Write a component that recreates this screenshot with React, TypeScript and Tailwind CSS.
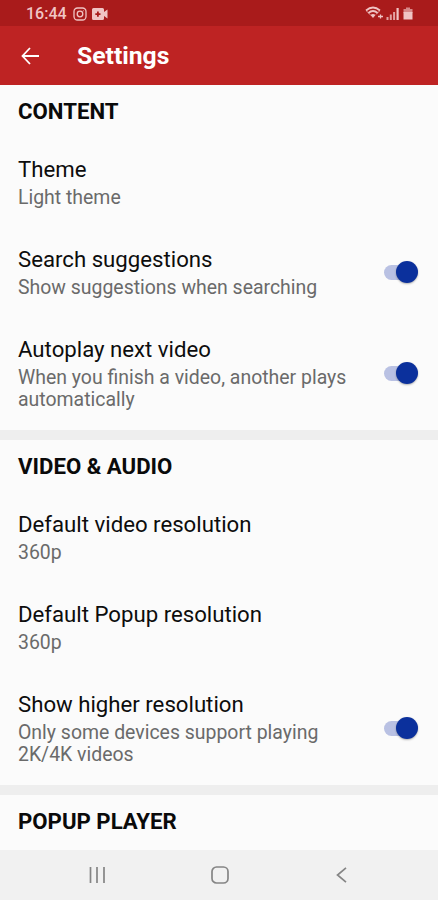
import React from "react";

function Toggle() {
  return (
    <span className="flex h-[22px] w-[34px] shrink-0 items-center">
      <span className="h-[15px] w-[26px] rounded-full bg-[#b9c1e3]" />
      <span className="-ml-[14px] size-[22px] shrink-0 rounded-full bg-[#0b309c] shadow-[0_1px_2px_rgba(0,0,0,0.3)]" />
    </span>
  );
}

type ItemProps = { title: string; lines: string[]; toggle?: boolean };

function Item({ title, lines, toggle }: ItemProps) {
  return (
    <div className="flex items-center justify-between pl-[18px] pr-[20.5px]">
      <div className="pt-[17.5px] pb-[18px]">
        <div className="mb-[4px] text-[22.2px] leading-[28px] whitespace-nowrap text-[#0d0d0d]">{title}</div>
        {lines.map((line) => (
          <div key={line} className="text-[19.45px] leading-[22.5px] whitespace-nowrap text-[#6a6a6a]">
            {line}
          </div>
        ))}
      </div>
      {toggle && <Toggle />}
    </div>
  );
}

function Heading({ children }: { children: React.ReactNode }) {
  return <h2 className="h-[52px] pl-[18px] pt-[13px] text-[22.2px] leading-[27px] font-bold text-[#0a0a0a]">{children}</h2>;
}

export default function App() {
  return (
    <div className="flex h-[900px] w-[438px] flex-col overflow-hidden bg-[#fbfbfb] font-['Roboto',sans-serif]">
      <div className="flex h-[26px] shrink-0 items-center bg-[#a91b1b] pl-[26px] pr-[24px] pt-[2px] text-[#f0c4c4]">
        <span className="w-[47px] text-[16px] leading-[20px] font-medium">16:44</span>
        <svg width="14" height="14" viewBox="0 0 14 14" fill="none" stroke="currentColor" strokeWidth="1.3">
          <rect x="1" y="1" width="12" height="12" rx="3.5" />
          <circle cx="7" cy="7" r="2.8" />
          <circle cx="10.3" cy="3.7" r=".5" fill="currentColor" stroke="none" />
        </svg>
        <svg className="ml-[5px]" width="16" height="12" viewBox="0 0 16 12" fill="currentColor" fillRule="evenodd">
          <path d="M1.5 0h9A1.500 1.500 0 0 1 12 1.500V4l3.500-2.500v9L12 8v2.500a1.500 1.500 0 0 1-1.500 1.500h-9A1.500 1.500 0 0 1 0 10.500v-9A1.500 1.500 0 0 1 1.500 0zM5 3.500v1.700H3.300v1.800H5v1.700h1.800V7h1.700V5.200H6.800V3.500z" />
        </svg>
        <svg className="ml-auto mb-[1px]" width="49" height="15" viewBox="0 0 49 15" fill="none" stroke="currentColor">
          <path d="M1 4.500Q8 -1.500 15 4.500M3.400 7Q8 3 12.600 7" strokeWidth="1.700" />
          <path d="M1.500 5L6 9.500M14.500 5L11 8.500" strokeWidth="1" opacity=".7" />
          <path d="M5.500 9Q8 7 10.500 9L8 12z" fill="currentColor" stroke="none" />
          <path d="M13 10.500h5M15.500 8.500v4" strokeWidth="1.300" />
          <path d="M22.500 14v-3M25.800 14V8.500M29.100 14V6" strokeWidth="2" opacity=".8" />
          <path d="M32.600 14V2" strokeWidth="2.200" />
          <path d="M41 1.500h4V3h2.500v4h-9V3H41z" fill="currentColor" stroke="none" opacity=".65" />
          <path d="M38.500 6h9v7.500h-9z" fill="currentColor" stroke="none" />
        </svg>
      </div>
      <header className="flex h-[59px] shrink-0 items-center bg-[#be2323] pl-[21px] text-white">
        <svg width="19" height="18" viewBox="0 0 19 18" fill="none" stroke="currentColor" strokeWidth="1.8">
          <path d="M9 1L1.500 9L9 17M1.500 9H18" />
        </svg>
        <h1 className="ml-[37px] pt-[1px] text-[24.7px] leading-[30px] font-bold">Settings</h1>
      </header>
      <main className="min-h-0 flex-1 overflow-hidden">
        <section className="h-[345px]">
          <Heading>CONTENT</Heading>
          <Item title="Theme" lines={["Light theme"]} />
          <Item title="Search suggestions" lines={["Show suggestions when searching"]} toggle />
          <Item title="Autoplay next video" lines={["When you finish a video, another plays", "automatically"]} toggle />
        </section>
        <div className="h-[10px] bg-[#eeeeee]" />
        <section className="h-[345px]">
          <Heading>VIDEO &amp; AUDIO</Heading>
          <Item title="Default video resolution" lines={["360p"]} />
          <Item title="Default Popup resolution" lines={["360p"]} />
          <Item title="Show higher resolution" lines={["Only some devices support playing", "2K/4K videos"]} toggle />
        </section>
        <div className="h-[10px] bg-[#eeeeee]" />
        <section>
          <Heading>POPUP PLAYER</Heading>
        </section>
      </main>
      <nav className="flex h-[50px] shrink-0 items-center bg-[#f1f1f1] pl-[89px] text-[#858585]">
        <svg width="17" height="16" viewBox="0 0 17 16" fill="none" stroke="currentColor" strokeWidth="1.7">
          <path d="M1.500 0v16M8 0v16M15 0v16" />
        </svg>
        <svg className="ml-[105px]" width="18" height="18" viewBox="0 0 18 18" fill="none" stroke="currentColor" strokeWidth="1.7">
          <rect x="1" y="1" width="16" height="16" rx="4.500" />
        </svg>
        <svg className="ml-[107px]" width="12" height="16" viewBox="0 0 12 16" fill="none" stroke="currentColor" strokeWidth="1.700">
          <path d="M10 .8L1.500 8l8.500 7.200" />
        </svg>
      </nav>
    </div>
  );
}
